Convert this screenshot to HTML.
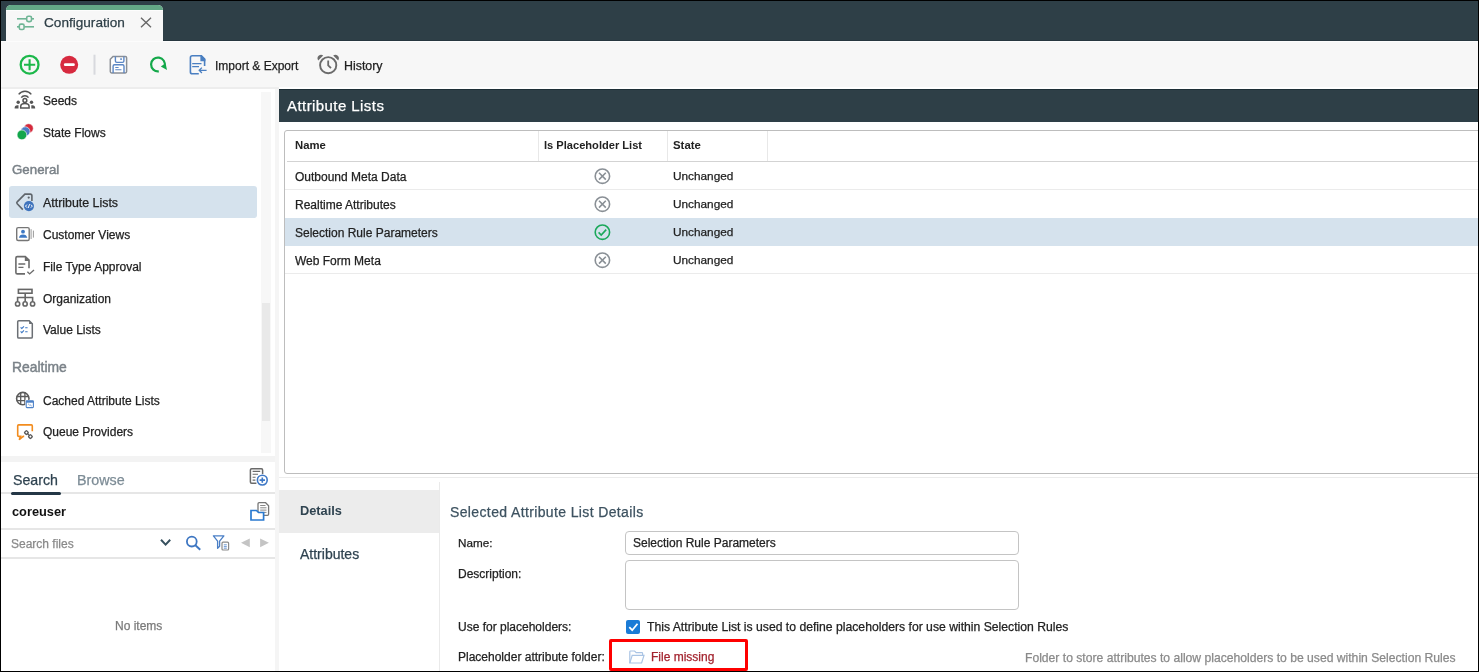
<!DOCTYPE html>
<html><head><meta charset="utf-8">
<style>
*{box-sizing:border-box;margin:0;padding:0}
html,body{width:1479px;height:672px;overflow:hidden;background:#fff}
body{position:relative;font-family:"Liberation Sans",sans-serif;color:#222}
.a{position:absolute}
.t{position:absolute;white-space:nowrap;line-height:1;font-size:12px;will-change:transform;-webkit-text-stroke:0.25px currentColor}
svg{position:absolute;overflow:visible}
</style></head><body>
<!-- top header -->
<div class="a" style="left:0;top:0;width:1479px;height:41px;background:#2e3f47"></div>
<!-- tab -->
<div class="a" style="left:6px;top:5px;width:157px;height:37px;background:#f7f7f7;border-radius:5px 5px 0 0;overflow:hidden">
  <div class="a" style="left:0;top:0;width:157px;height:5px;background:#63a886"></div>
  <div class="a" style="left:0;top:5px;width:157px;height:1px;background:#fdfdfd"></div>
</div>
<svg style="left:0;top:0" width="40" height="40">
  <g stroke="#6fb595" stroke-width="1.6" fill="none">
    <line x1="17" y1="18.8" x2="26.5" y2="18.8"/><line x1="31.5" y1="18.8" x2="34" y2="18.8"/>
    <rect x="26.7" y="16.2" width="4.8" height="5.4" rx="1.6"/>
    <line x1="17" y1="26.8" x2="19.2" y2="26.8"/><line x1="24.4" y1="26.8" x2="34" y2="26.8"/>
    <rect x="19.3" y="24.1" width="4.8" height="5.4" rx="1.6"/>
  </g>
</svg>
<div class="t" style="left:43.5px;top:16.1px;font-size:13.6px;color:#2e3f47">Configuration</div>
<svg style="left:0;top:0" width="160" height="40">
  <g stroke="#666" stroke-width="1.3"><line x1="141" y1="17.8" x2="151" y2="27.3"/><line x1="151" y1="17.8" x2="141" y2="27.3"/></g>
</svg>
<!-- toolbar -->
<div class="a" style="left:0;top:41px;width:1479px;height:47px;background:#f7f7f7"></div>
<div class="a" style="left:163px;top:40px;width:1316px;height:1px;background:#27373f"></div>
<div class="a" style="left:0;top:41px;width:1479px;height:1px;background:#fcfcfc"></div>
<div class="a" style="left:0;top:87px;width:279px;height:2px;background:#ededed"></div>
<div class="a" style="left:279px;top:87px;width:1200px;height:2px;background:#fff"></div>

<div class="t" style="left:214.9px;top:59.9px;color:#1e1e1e">Import &amp; Export</div>
<div class="t" style="left:344.4px;top:59.9px;font-size:12.4px;color:#1e1e1e">History</div>
<!-- sidebar top -->
<div class="a" style="left:0;top:89px;width:275px;height:367px;background:#fff"></div>
<div class="a" style="left:275px;top:89px;width:4px;height:583px;background:#f5f5f5"></div>
<div class="a" style="left:261px;top:92px;width:10px;height:361px;background:#f7f7f7"></div>
<div class="a" style="left:262px;top:303px;width:8px;height:118px;background:#e9e9e9"></div>
<div class="a" style="left:0;top:456px;width:275px;height:6px;background:#f3f3f3"></div>
<div class="a" style="left:9px;top:186px;width:248px;height:32px;background:#d5e2ed;border-radius:3px"></div>

<div class="t" style="left:43.2px;top:94.5px">Seeds</div>
<div class="t" style="left:43.2px;top:126.6px">State Flows</div>
<div class="t" style="left:12px;top:163px;font-size:13.3px;color:#7a8288;-webkit-text-stroke:0.45px #7a8288">General</div>
<div class="t" style="left:43.2px;top:196.6px;font-size:12.4px">Attribute Lists</div>
<div class="t" style="left:43.2px;top:228.5px">Customer Views</div>
<div class="t" style="left:43.2px;top:260.5px">File Type Approval</div>
<div class="t" style="left:43.2px;top:292.5px">Organization</div>
<div class="t" style="left:43.2px;top:324px">Value Lists</div>
<div class="t" style="left:12.3px;top:361px;font-size:13.9px;color:#7a8288;-webkit-text-stroke:0.45px #7a8288">Realtime</div>
<div class="t" style="left:43.2px;top:394.7px">Cached Attribute Lists</div>
<div class="t" style="left:43.2px;top:426.4px">Queue Providers</div>

<!-- sidebar bottom -->
<div class="a" style="left:0;top:462px;width:275px;height:210px;background:#fff"></div>
<div class="t" style="left:12.5px;top:473.1px;font-size:14.2px;color:#2f4350">Search</div>
<div class="t" style="left:76.8px;top:473.1px;font-size:14.3px;color:#7d8c96">Browse</div>
<div class="a" style="left:1px;top:492px;width:274px;height:1.5px;background:#e6e6e6"></div>
<div class="a" style="left:10.5px;top:491.5px;width:50px;height:3px;background:#243746;border-radius:2px"></div>
<div class="t" style="left:11.9px;top:505.7px;font-size:12.8px;font-weight:700;-webkit-text-stroke:0;color:#111">coreuser</div>
<div class="a" style="left:1px;top:528px;width:274px;height:1.5px;background:#e6e6e6"></div>
<div class="t" style="left:11.4px;top:537.8px;color:#8a8a8a">Search files</div>
<div class="a" style="left:1px;top:557px;width:274px;height:1.5px;background:#e6e6e6"></div>
<div class="t" style="left:114.9px;top:620.2px;color:#7a7a7a">No items</div>

<!-- main header -->
<div class="a" style="left:279px;top:89px;width:1200px;height:32.5px;background:#2e3f47"></div>
<div class="a" style="left:279px;top:89px;width:1200px;height:1px;background:#1e2f37"></div>
<div class="t" style="left:287.3px;top:98px;font-size:15px;letter-spacing:0.43px;color:#fff">Attribute Lists</div>
<div class="a" style="left:279px;top:121.5px;width:1200px;height:356px;background:#fff"></div>

<!-- table -->
<div class="a" style="left:283.5px;top:130px;width:1300px;height:343.5px;border:1.2px solid #bdbdbd;border-radius:3px"></div>
<div class="a" style="left:286.5px;top:160.5px;width:1200px;height:1.5px;background:#d3d3d3"></div>
<div class="a" style="left:538px;top:131px;width:1px;height:30px;background:#e8e8e8"></div>
<div class="a" style="left:667px;top:131px;width:1px;height:30px;background:#e8e8e8"></div>
<div class="a" style="left:767px;top:131px;width:1px;height:30px;background:#e8e8e8"></div>
<div class="a" style="left:285px;top:189px;width:1200px;height:1px;background:#ebebeb"></div>
<div class="a" style="left:285px;top:217.5px;width:1200px;height:28px;background:#d5e2ed"></div>
<div class="a" style="left:285px;top:273px;width:1200px;height:1px;background:#ebebeb"></div>
<div class="t" style="left:294.9px;top:140.1px;font-size:11.3px;font-weight:700;-webkit-text-stroke:0">Name</div>
<div class="t" style="left:543.7px;top:140.1px;font-size:11.1px;font-weight:700;-webkit-text-stroke:0">Is Placeholder List</div>
<div class="t" style="left:673px;top:140.1px;font-size:11.4px;font-weight:700;-webkit-text-stroke:0">State</div>

<div class="t" style="left:294.8px;top:170.7px">Outbound Meta Data</div>
<div class="t" style="left:294.8px;top:198.7px">Realtime Attributes</div>
<div class="t" style="left:294.8px;top:226.7px">Selection Rule Parameters</div>
<div class="t" style="left:294.8px;top:254.7px">Web Form Meta</div>
<div class="t" style="left:673px;top:170.7px;font-size:11.8px">Unchanged</div>
<div class="t" style="left:673px;top:198.7px;font-size:11.8px">Unchanged</div>
<div class="t" style="left:673px;top:226.7px;font-size:11.8px">Unchanged</div>
<div class="t" style="left:673px;top:254.7px;font-size:11.8px">Unchanged</div>

<div class="a" style="left:279px;top:477px;width:1200px;height:1px;background:#ececec"></div>

<!-- details -->
<div class="a" style="left:279px;top:490px;width:160px;height:42.5px;background:#ececec"></div>
<div class="a" style="left:439px;top:482px;width:1.2px;height:190px;background:#eaeaea"></div>
<div class="t" style="left:299.5px;top:504.8px;font-size:12.8px;font-weight:700;-webkit-text-stroke:0;color:#2f4350">Details</div>
<div class="t" style="left:299.5px;top:547.3px;font-size:14px;color:#2f4350">Attributes</div>
<div class="t" style="left:449.7px;top:505.2px;font-size:14px;letter-spacing:0.37px;color:#3d5260">Selected Attribute List Details</div>
<div class="t" style="left:458.2px;top:536.8px;font-size:11.7px">Name:</div>
<div class="a" style="left:625px;top:531px;width:394px;height:24px;border:1.3px solid #c4c4c4;border-radius:4px"></div>
<div class="t" style="left:632.5px;top:537.4px">Selection Rule Parameters</div>
<div class="t" style="left:458.2px;top:567.7px">Description:</div>
<div class="a" style="left:625px;top:560px;width:394px;height:50px;border:1.3px solid #c4c4c4;border-radius:4px"></div>
<div class="t" style="left:458.2px;top:620.6px">Use for placeholders:</div>
<div class="a" style="left:626.3px;top:620px;width:14px;height:14px;background:#1a7bd6;border-radius:2px"></div>
<svg style="left:0;top:0" width="10" height="10"><path d="M629.3 627.2 L632.2 630.2 L637.5 623.8" stroke="#fff" stroke-width="1.8" fill="none"/></svg>
<div class="t" style="left:646.5px;top:620.6px;font-size:12.2px">This Attribute List is used to define placeholders for use within Selection Rules</div>
<div class="t" style="left:457.9px;top:651.1px">Placeholder attribute folder:</div>
<div class="a" style="left:608.5px;top:638.5px;width:139px;height:32.3px;border:3px solid #fe0000;border-radius:2px"></div>
<div class="t" style="left:651.4px;top:650.7px;color:#a3232e">File missing</div>
<div class="t" style="left:1025.3px;top:651.6px;color:#8a8a8a;font-size:12.15px">Folder to store attributes to allow placeholders to be used within Selection Rules</div>

<svg style="left:0;top:0" width="1479" height="672" viewBox="0 0 1479 672">
<!-- toolbar -->
<circle cx="29.6" cy="64.7" r="8.9" fill="none" stroke="#1db84b" stroke-width="2.3"/>
<path d="M24 64.7H35.2M29.6 59.2V70.3" stroke="#1db84b" stroke-width="2.1"/>
<circle cx="69.2" cy="64.8" r="9" fill="#d72a3f"/>
<rect x="63.9" y="63.3" width="10.9" height="2.8" rx="1.3" fill="#fff"/>
<rect x="93.5" y="54.7" width="2" height="20" fill="#d8d9de"/>
<!-- floppy -->
<path d="M113 56.5H125.3Q126.6 56.5 126.6 57.8V71.6Q126.6 72.9 125.3 72.9H111.6Q110.3 72.9 110.3 71.6V59.3Z" fill="#fff" stroke="#8a8f96" stroke-width="1.5"/>
<path d="M115.4 56.5V61Q115.4 62.4 116.8 62.4H122.5Q123.9 62.4 123.9 61V56.5" fill="none" stroke="#5b87c5" stroke-width="1.4"/>
<rect x="120.3" y="58.2" width="1.5" height="1.8" fill="#5b87c5"/>
<path d="M113.1 72.9V66.2Q113.1 64.8 114.5 64.8H122.6Q124 64.8 124 66.2V72.9" fill="none" stroke="#5b87c5" stroke-width="1.4"/>
<path d="M115.3 67.5H118.6M115.3 69.7H121.5" stroke="#5b87c5" stroke-width="1.1"/>
<!-- refresh -->
<path d="M158.8 71.3A6.9 6.9 0 1 1 164.6 66.4" fill="none" stroke="#14a84a" stroke-width="2.2"/>
<path d="M160.8 66.6L167 70L165.6 63.2Z" fill="#14a84a"/>
<!-- import doc -->
<path d="M204.6 66V59.2L201.2 55.8H192.3Q190.4 55.8 190.4 57.7V71.9Q190.4 73.8 192.3 73.8H198.8" fill="none" stroke="#4a7fc1" stroke-width="1.6"/>
<path d="M200.4 55.1H201.6L205.4 59V61.2H200.4Z" fill="#4a7fc1"/>
<path d="M192.2 63.7H201.5M192.2 66.7H199" stroke="#4a7fc1" stroke-width="1.2"/>
<path d="M199.3 70.3H206.6M201.9 67.6L199.2 70.3L201.9 73" fill="none" stroke="#4a7fc1" stroke-width="1.3"/>
<!-- clock -->
<circle cx="328.2" cy="65.2" r="8.1" fill="none" stroke="#6b6b6b" stroke-width="1.9"/>
<path d="M328.2 60.6V65.4L331 68.2" fill="none" stroke="#6b6b6b" stroke-width="1.8"/>
<path d="M318.2 60.4A3.6 3.6 0 0 1 323.2 55.4Z" fill="#6b6b6b"/>
<path d="M338.2 60.4A3.6 3.6 0 0 0 333.2 55.4Z" fill="#6b6b6b"/>

<!-- sidebar: seeds -->
<g fill="none" stroke="#555" stroke-width="1.5">
<path d="M18.7 94.4A7.7 7.7 0 0 1 31.3 94.4"/>
<path d="M21.3 97.6A4.4 4.4 0 0 1 28.5 97.6"/>
<circle cx="24.9" cy="100.5" r="1.9"/>
<path d="M20.7 108V106.5Q20.7 103.5 24.9 103.5Q29.1 103.5 29.1 106.5V108Z"/>
</g>
<g fill="#555">
<circle cx="18.2" cy="102.2" r="1.7"/><circle cx="31.5" cy="102.2" r="1.7"/>
<path d="M14.6 108.6Q14.6 105.3 17.3 105.3H18.5V108.6Z"/>
<path d="M35.2 108.6Q35.2 105.3 32.5 105.3H31.3V108.6Z"/>
</g>
<!-- state flows -->
<circle cx="28.6" cy="128.4" r="4.7" fill="#d42a3c" stroke="#fff" stroke-width="0.6"/>
<circle cx="25.3" cy="131.5" r="4.7" fill="#4a7bc4" stroke="#fff" stroke-width="0.6"/>
<circle cx="21.9" cy="134.9" r="4.85" fill="#12a64b" stroke="#fff" stroke-width="0.6"/>
<!-- attribute lists tag -->
<path d="M31.9 200.9V195.8Q31.9 194.1 30.2 194.1H24.9L17.2 201.9Q16.3 202.8 17.2 203.7L22.8 209.6" fill="none" stroke="#5f656b" stroke-width="1.6"/>
<circle cx="28.7" cy="197.6" r="1.1" fill="#5f656b"/>
<circle cx="28.9" cy="206.1" r="5.1" fill="#3f74bd"/>
<path d="M26.9 204.6L25.5 206.1L26.9 207.6M30.9 204.6L32.3 206.1L30.9 207.6M29.6 204.2L28.2 208" fill="none" stroke="#fff" stroke-width="1"/>
<!-- customer views -->
<rect x="16.7" y="227.6" width="12.5" height="12.9" rx="1.5" fill="#fff" stroke="#767676" stroke-width="1.4"/>
<path d="M31.1 229.2V239M33.4 230.6V237.6" stroke="#9a9a9a" stroke-width="1"/>
<circle cx="23" cy="231.7" r="1.9" fill="#3d78c4"/>
<path d="M18.9 237.8Q19.5 234.4 23 234.4Q26.5 234.4 27.3 237.8Z" fill="#3d78c4"/>
<!-- file type approval -->
<path d="M29 268.3V260.2L25.3 256.6H17.3Q15.9 256.6 15.9 258V272.5Q15.9 273.9 17.3 273.9H25" fill="none" stroke="#6b6b6b" stroke-width="1.6"/>
<path d="M24.8 256.3L29.4 260.9H24.8Z" fill="#6b6b6b"/>
<path d="M18.4 264H25.3M18.4 267.4H23.5" stroke="#6b6b6b" stroke-width="1.4"/>
<path d="M27.4 271.8L29.6 273.9L34 269.9" fill="none" stroke="#6b6b6b" stroke-width="1.4"/>
<!-- organization -->
<g fill="none" stroke="#666" stroke-width="1.6">
<rect x="18.4" y="289.4" width="13.6" height="3.8"/>
<path d="M25.2 293.2V301.6M17.6 301.6V297.5H32.6V301.6"/>
<circle cx="17.6" cy="303.9" r="2.1"/><circle cx="25.1" cy="303.9" r="2.1"/><circle cx="32.6" cy="303.9" r="2.1"/>
</g>
<!-- value lists -->
<path d="M29.2 320.7H18.8Q17.7 320.7 17.7 321.8V337Q17.7 338.1 18.8 338.1H31.2Q32.3 338.1 32.3 337V323.8Z" fill="none" stroke="#6b6f74" stroke-width="1.5"/>
<path d="M29.1 320.5L32.5 323.9H29.1Z" fill="#6b6f74"/>
<path d="M20.6 327.3L21.8 328.5L24 326.3M20.6 331.4L21.8 332.6L24 330.4" fill="none" stroke="#3d78c4" stroke-width="1.1"/>
<path d="M25.2 327.7H27.6M25.2 331.8H27.6" stroke="#3d78c4" stroke-width="1.1"/>
<!-- cached attribute lists -->
<circle cx="22.8" cy="398.6" r="6.2" fill="none" stroke="#5a5a5a" stroke-width="1.6"/>
<path d="M16.6 396.5H29M16.6 400.7H29M20.7 392.4V404.8M24.9 392.4V404.8" stroke="#5a5a5a" stroke-width="1.3"/>
<rect x="26" y="400.6" width="7.6" height="7.2" fill="#fff" stroke="#fff" stroke-width="1.5"/>
<rect x="26.2" y="400.8" width="7.2" height="6.8" rx="0.8" fill="none" stroke="#4d82c8" stroke-width="1.1"/>
<rect x="26.2" y="400.8" width="7.2" height="1.9" fill="#4d82c8"/>
<path d="M28.3 404L29.6 405.2M30.2 404.8L31.6 406" stroke="#4d82c8" stroke-width="0.9"/>
<!-- queue providers -->
<path d="M32.3 431.2V425.9Q32.3 424.9 31.3 424.9H18.7Q17.7 424.9 17.7 425.9V435.4Q17.7 436.4 18.7 436.4H20.6L19.2 439.7L23.2 436.4H24.2" fill="none" stroke="#f28c1e" stroke-width="1.6"/>
<rect x="24.9" y="431.1" width="3" height="3" rx="0.6" transform="rotate(45 26.4 432.6)" fill="none" stroke="#5a5a5a" stroke-width="1.3"/>
<rect x="28.9" y="435.1" width="3" height="3" rx="0.6" transform="rotate(45 30.4 436.6)" fill="none" stroke="#5a5a5a" stroke-width="1.3"/>
<path d="M27.6 433.8L29.2 435.4" stroke="#5a5a5a" stroke-width="1.3"/>
<!-- bottom left icons -->
<path d="M262.6 474V469.9Q262.6 468.7 261.4 468.7H251.6Q250.4 468.7 250.4 469.9V482Q250.4 483.2 251.6 483.2H256.4" fill="none" stroke="#6a6a6a" stroke-width="1.5"/>
<path d="M252.6 471.4H260.2M252.6 474.3H258M252.6 477.2H255.6M252.6 480.1H255.4" stroke="#6a6a6a" stroke-width="1.1"/>
<circle cx="262.3" cy="480.1" r="4.9" fill="#fff" stroke="#3e78c6" stroke-width="1.6"/>
<path d="M259.6 480.1H265M262.3 477.4V482.8" stroke="#3e78c6" stroke-width="1.6"/>
<path d="M258 512V503.8Q258 502.7 259.1 502.7H265.6L268.6 505.7V514.3Q268.6 515.4 267.5 515.4H264" fill="#fff" stroke="#777" stroke-width="1.3"/>
<path d="M260.2 505.5H265.5M260.2 507.8H266.5M260.2 510.1H266.5M260.2 512.4H266.5" stroke="#888" stroke-width="1"/>
<path d="M251 520V510.5H256.5L258.5 512.5H263.6V520Z" fill="#fff" stroke="#2a7ad0" stroke-width="1.7"/>
<path d="M161 539.8L165.6 544.6L170.2 539.8" fill="none" stroke="#36505e" stroke-width="2"/>
<circle cx="191.8" cy="541.6" r="4.9" fill="none" stroke="#3d76c2" stroke-width="1.8"/>
<path d="M195.4 545.2L200.2 549.8" stroke="#3d76c2" stroke-width="1.9"/>
<path d="M213.4 535.8H223.9L219.6 541.2V546.2L217.6 548.2V541.2Z" fill="none" stroke="#4a7fc6" stroke-width="1.3" stroke-linejoin="round"/>
<rect x="222" y="542.2" width="6.6" height="7.8" rx="1" fill="#fff" stroke="#8a8a8a" stroke-width="1.2"/>
<path d="M223.8 544.8H226.8M223.8 546.6H226.8M223.8 548.2H226.8" stroke="#4a7fc6" stroke-width="0.8"/>
<path d="M241 542.8L249.8 538.4V547.2Z" fill="#c4c4c4"/>
<path d="M268.9 542.8L260.1 538.4V547.2Z" fill="#c4c4c4"/>

<!-- table icons -->
<g fill="none" stroke="#8a9096" stroke-width="1.6">
<circle cx="602.4" cy="176.2" r="7.2"/><path d="M599 172.8L605.8 179.6M605.8 172.8L599 179.6"/>
<circle cx="602.4" cy="204.2" r="7.2"/><path d="M599 200.8L605.8 207.6M605.8 200.8L599 207.6"/>
<circle cx="602.4" cy="260.2" r="7.2"/><path d="M599 256.8L605.8 263.6M605.8 256.8L599 263.6"/>
</g>
<circle cx="602.4" cy="232.2" r="7.2" fill="none" stroke="#1aa85a" stroke-width="1.6"/>
<path d="M598.6 232.4L601.2 235L606.2 229.6" fill="none" stroke="#1aa85a" stroke-width="1.6"/>

<!-- file missing folder -->
<path d="M629.8 663V651.8Q629.8 651 630.6 651H634.6L636.2 652.6H641.8Q642.6 652.6 642.6 653.4V655" fill="none" stroke="#aac4e4" stroke-width="1.2"/>
<path d="M629.8 663L632.2 655.4H644L641.6 663Z" fill="none" stroke="#aac4e4" stroke-width="1.2"/>
</svg>
<!-- outer border -->
<div class="a" style="left:0;top:0;width:1479px;height:672px;border:1px solid #000"></div>
</body></html>
